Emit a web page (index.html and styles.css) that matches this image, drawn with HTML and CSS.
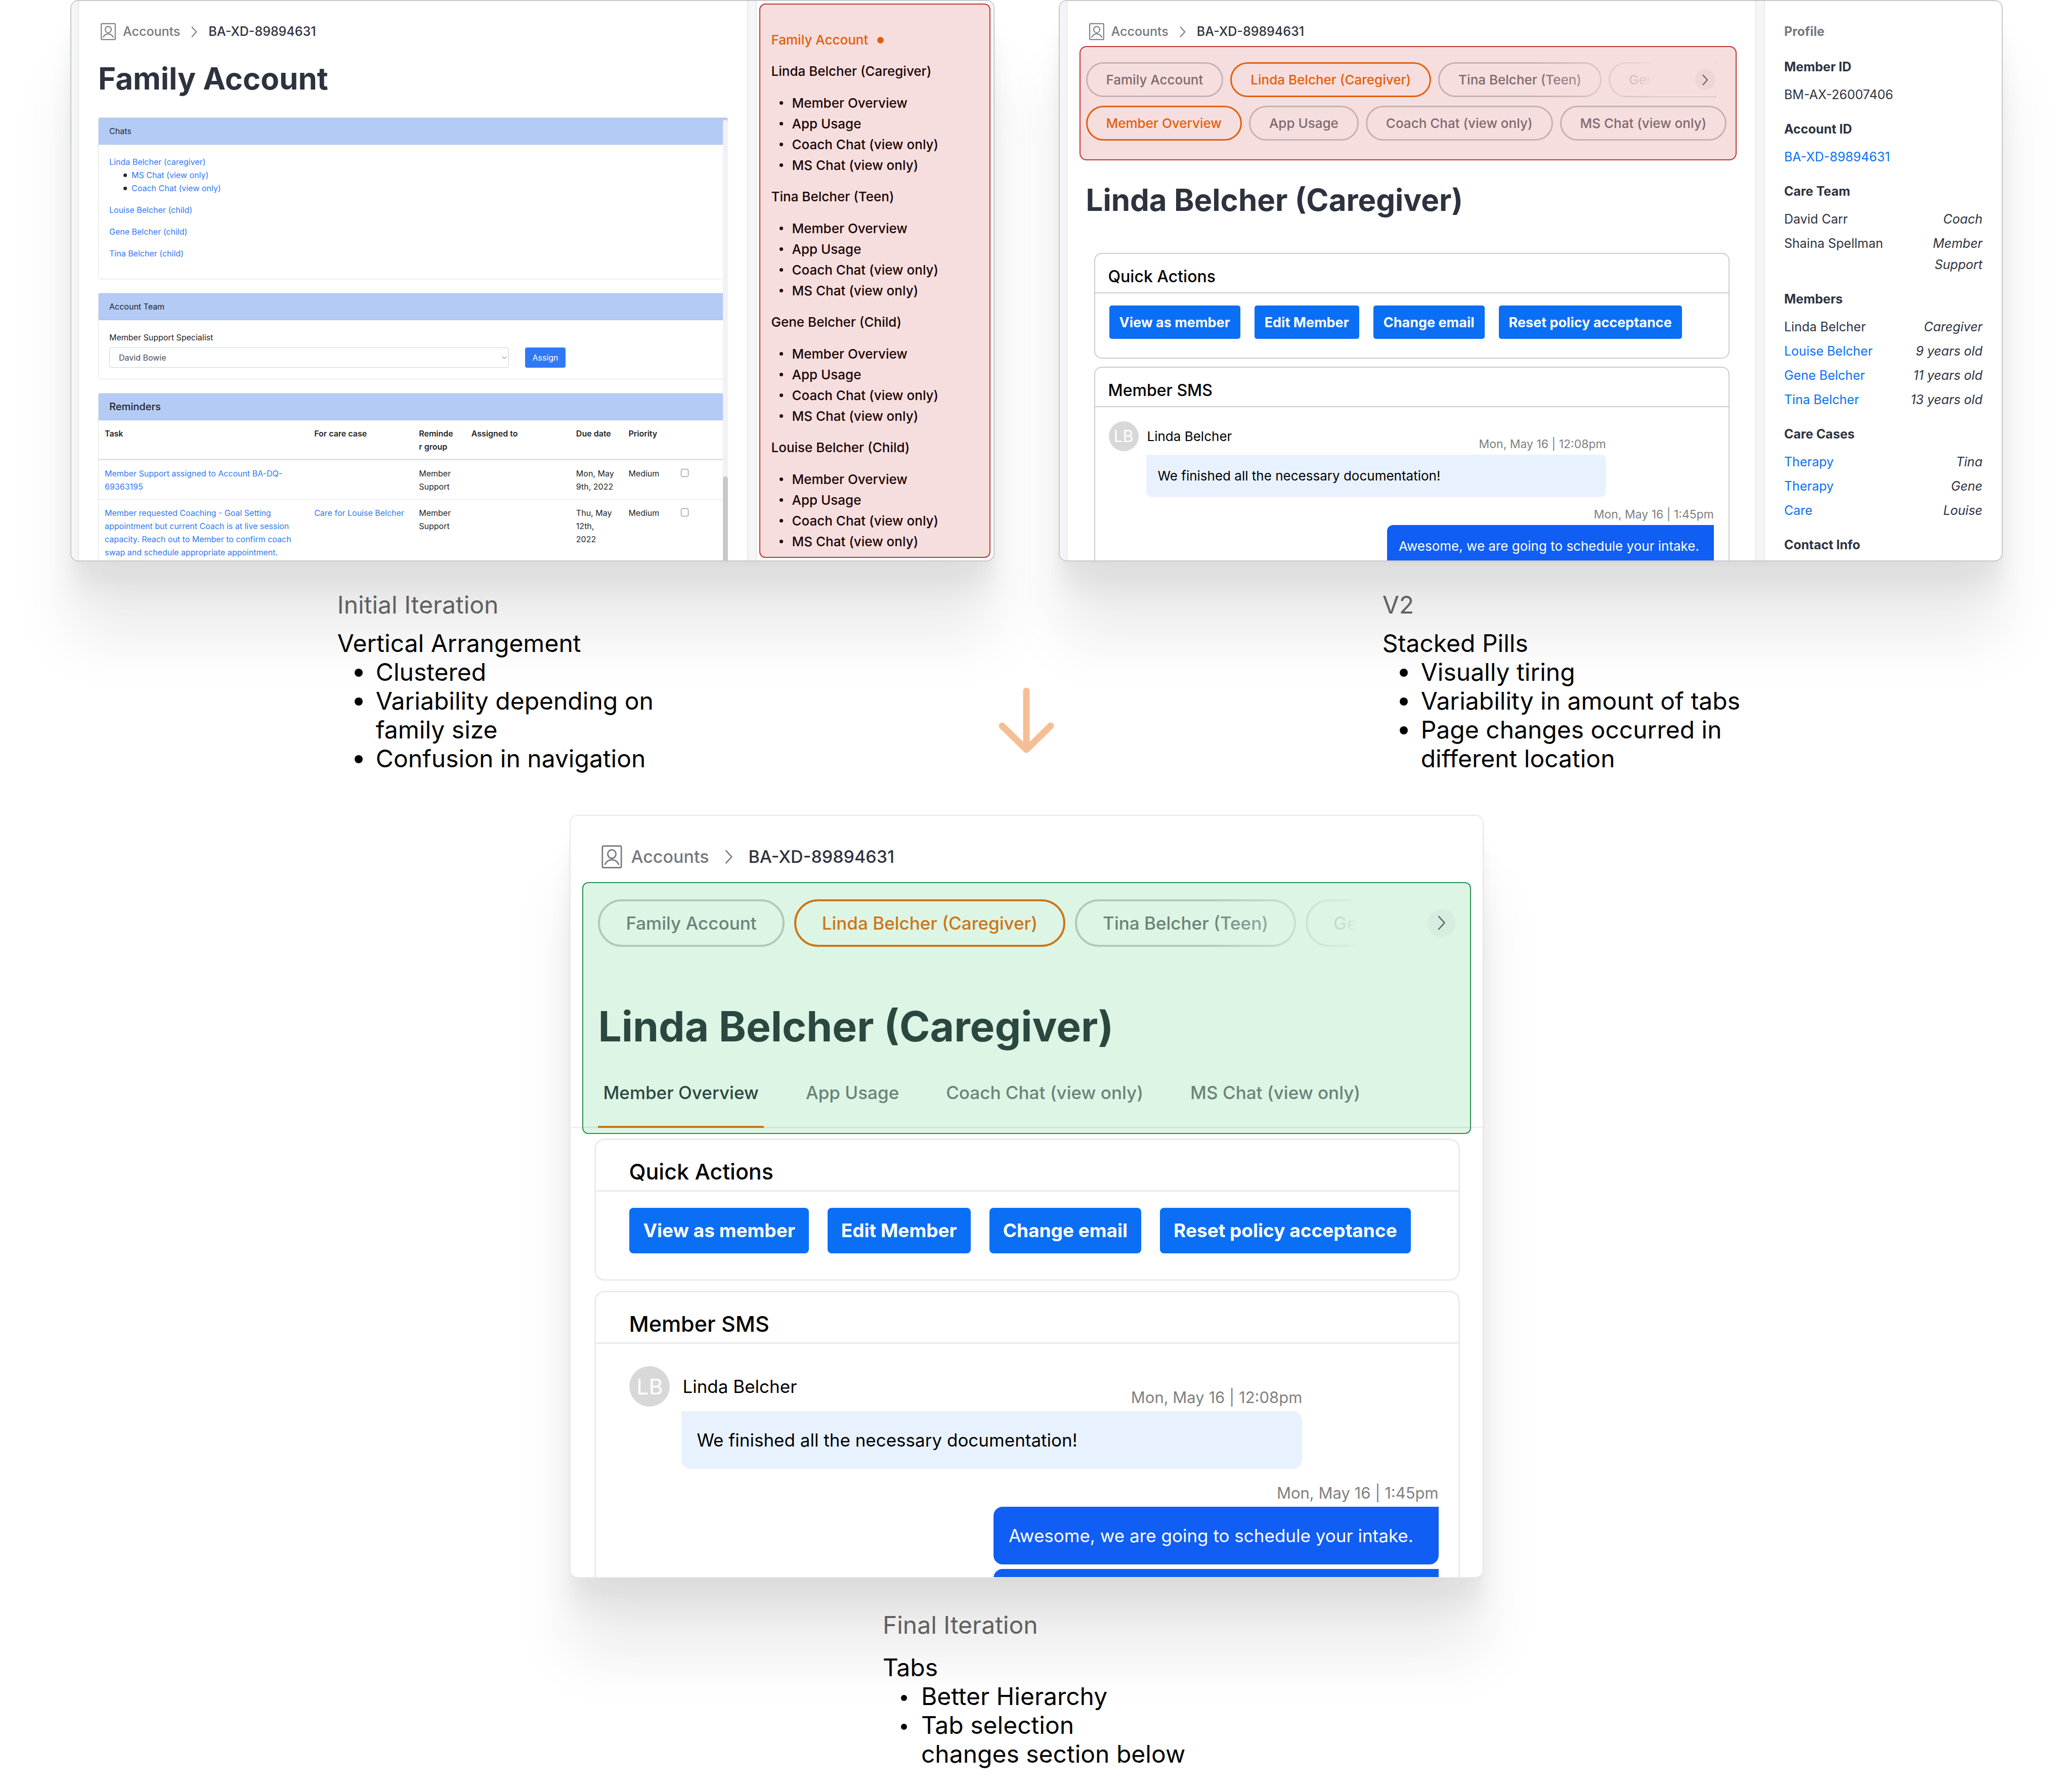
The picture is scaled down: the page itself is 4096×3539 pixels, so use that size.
FILE: index.html
```html
<!DOCTYPE html>
<html lang="en">
<head>
<meta charset="utf-8">
<meta name="viewport" content="width=device-width, initial-scale=1">
<title>Family account navigation: design iterations</title>
<link rel="stylesheet" href="styles.css">
</head>
<body>
<svg class="sprite" aria-hidden="true">
  <symbol id="icon-user" viewBox="0 0 30 34">
    <rect x="1.2" y="1.2" width="27.6" height="31.6" rx="1.6"/>
    <ellipse cx="15" cy="13" rx="6" ry="6.2"/>
    <path d="M5 28c2.200-4.400 5.800-6.600 10-6.600s7.800 2.200 10 6.600"/>
  </symbol>
  <symbol id="icon-chevron" viewBox="0 0 12 22">
    <path d="M1.500 1.500 10.200 11 1.500 20.500"/>
  </symbol>
</svg>

<main>
  <div class="compare">
    <section class="screen screen--first" aria-label="Initial iteration">
      <div class="main-col">
        <nav class="crumbs" aria-label="Breadcrumb">
          <svg class="crumbs__user"><use href="#icon-user"/></svg>
          <a href="#accounts">Accounts</a>
          <svg class="crumbs__sep"><use href="#icon-chevron"/></svg>
          <span class="crumbs__here">BA-XD-89894631</span>
        </nav>
        <h1>Family Account</h1>
        <div class="scroll">
          <section class="box">
            <h2 class="box__head">Chats</h2>
            <div class="box__body">
              <a href="#linda">Linda Belcher (caregiver)</a>
              <ul class="chat-list">
                <li><a href="#ms">MS Chat (view only)</a></li>
                <li><a href="#coach">Coach Chat (view only)</a></li>
              </ul>
              <p><a href="#louise">Louise Belcher (child)</a></p>
              <p><a href="#gene">Gene Belcher (child)</a></p>
              <p><a href="#tina">Tina Belcher (child)</a></p>
            </div>
          </section>
          <section class="box">
            <h2 class="box__head">Account Team</h2>
            <form class="box__body">
              <label for="specialist">Member Support Specialist</label>
              <div class="assign">
                <div class="select">
                  <select id="specialist"><option>David Bowie</option></select>
                  <svg viewBox="0 0 12 12"><path d="M2 4l4 4 4-4"/></svg>
                </div>
                <button type="button" class="assign__btn">Assign</button>
              </div>
            </form>
          </section>
          <section class="box">
            <h2 class="box__head box__head--big">Reminders</h2>
            <table>
              <colgroup><col class="c4"><col class="c2"><col class="c1"><col class="c2"><col class="c1"><col class="c1"><col class="c1"></colgroup>
              <thead>
                <tr><th>Task</th><th>For care case</th><th>Reminde<br>r group</th><th>Assigned to</th><th>Due date</th><th>Priority</th><th></th></tr>
              </thead>
              <tbody>
                <tr>
                  <td><a href="#task1">Member Support assigned to Account BA-DQ-69363195</a></td>
                  <td></td><td>Member Support</td><td></td><td>Mon, May 9th, 2022</td><td>Medium</td>
                  <td><input type="checkbox" aria-label="Complete first reminder"></td>
                </tr>
                <tr>
                  <td><a href="#task2">Member requested Coaching - Goal Setting appointment but current Coach is at live session capacity. Reach out to Member to confirm coach swap and schedule appropriate appointment.</a></td>
                  <td><a href="#care">Care for Louise Belcher</a></td><td>Member Support</td><td></td><td>Thu, May 12th,<br>2022</td><td>Medium</td>
                  <td><input type="checkbox" aria-label="Complete second reminder"></td>
                </tr>
              </tbody>
            </table>
          </section>
          <div class="scrollbar"><div class="scrollbar__thumb"></div></div>
        </div>
      </div>
      <aside class="side-nav">
        <nav class="tree" aria-label="Family">
          <p class="tree__current">Family Account</p>
          <h3>Linda Belcher (Caregiver)</h3>
          <ul><li>Member Overview</li><li>App Usage</li><li>Coach Chat (view only)</li><li>MS Chat (view only)</li></ul>
          <h3>Tina Belcher (Teen)</h3>
          <ul><li>Member Overview</li><li>App Usage</li><li>Coach Chat (view only)</li><li>MS Chat (view only)</li></ul>
          <h3>Gene Belcher (Child)</h3>
          <ul><li>Member Overview</li><li>App Usage</li><li>Coach Chat (view only)</li><li>MS Chat (view only)</li></ul>
          <h3>Louise Belcher (Child)</h3>
          <ul><li>Member Overview</li><li>App Usage</li><li>Coach Chat (view only)</li><li>MS Chat (view only)</li></ul>
        </nav>
      </aside>
    </section>

    <section class="screen screen--second" aria-label="V2">
      <div class="main-col">
        <nav class="crumbs" aria-label="Breadcrumb">
          <svg class="crumbs__user"><use href="#icon-user"/></svg>
          <a href="#accounts">Accounts</a>
          <svg class="crumbs__sep"><use href="#icon-chevron"/></svg>
          <span class="crumbs__here">BA-XD-89894631</span>
        </nav>
        <div class="mark mark--red">
          <div class="pills pills--clip">
            <button type="button" class="pill">Family Account</button>
            <button type="button" class="pill pill--on">Linda Belcher (Caregiver)</button>
            <button type="button" class="pill">Tina Belcher (Teen)</button>
            <button type="button" class="pill">Gene Belcher (Child)</button>
            <div class="pills__fade"></div>
            <button type="button" class="pills__next" aria-label="Next members"><svg><use href="#icon-chevron"/></svg></button>
          </div>
          <div class="pills">
            <button type="button" class="pill pill--on">Member Overview</button>
            <button type="button" class="pill">App Usage</button>
            <button type="button" class="pill">Coach Chat (view only)</button>
            <button type="button" class="pill">MS Chat (view only)</button>
          </div>
        </div>
        <h1>Linda Belcher (Caregiver)</h1>
        <div class="cards">
          <section class="card">
            <h2>Quick Actions</h2>
            <div class="actions">
              <button type="button">View as member</button>
              <button type="button">Edit Member</button>
              <button type="button">Change email</button>
              <button type="button">Reset policy acceptance</button>
            </div>
          </section>
          <section class="card">
            <h2>Member SMS</h2>
            <div class="sms">
              <div class="msg msg--in">
                <span class="avatar">LB</span>
                <div class="msg__col">
                  <div class="msg__head"><span>Linda Belcher</span><time>Mon, May 16 | 12:08pm</time></div>
                  <p class="bubble">We finished all the necessary documentation!</p>
                </div>
              </div>
              <div class="msg msg--out">
                <time>Mon, May 16 | 1:45pm</time>
                <p class="bubble">Awesome, we are going to schedule your intake.</p>
              </div>
            </div>
          </section>
        </div>
      </div>
      <aside class="profile">
        <h2>Profile</h2>
        <h3>Member ID</h3>
        <ul><li><span>BM-AX-26007406</span></li></ul>
        <h3>Account ID</h3>
        <ul><li><a href="#account">BA-XD-89894631</a></li></ul>
        <h3>Care Team</h3>
        <ul>
          <li><span>David Carr</span><em>Coach</em></li>
          <li><span>Shaina Spellman</span><em>Member<br>Support</em></li>
        </ul>
        <h3>Members</h3>
        <ul>
          <li><span>Linda Belcher</span><em>Caregiver</em></li>
          <li><a href="#louise">Louise Belcher</a><em>9 years old</em></li>
          <li><a href="#gene">Gene Belcher</a><em>11 years old</em></li>
          <li><a href="#tina">Tina Belcher</a><em>13 years old</em></li>
        </ul>
        <h3>Care Cases</h3>
        <ul>
          <li><a href="#t1">Therapy</a><em>Tina</em></li>
          <li><a href="#t2">Therapy</a><em>Gene</em></li>
          <li><a href="#c1">Care</a><em>Louise</em></li>
        </ul>
        <h3>Contact Info</h3>
      </aside>
    </section>

    <div class="caption caption--first">
      <h2>Initial Iteration</h2>
      <p>Vertical Arrangement</p>
      <ul><li>Clustered</li><li>Variability depending on family size</li><li>Confusion in navigation</li></ul>
    </div>
    <svg class="arrow" viewBox="0 0 110 130" aria-hidden="true"><path d="M55 7v114M7 76l48 47 48-47"/></svg>
    <div class="caption caption--second">
      <h2>V2</h2>
      <p>Stacked Pills</p>
      <ul><li>Visually tiring</li><li>Variability in amount of tabs</li><li>Page changes occurred in different location</li></ul>
    </div>
  </div>

  <div class="final">
    <section class="screen screen--final" aria-label="Final iteration">
      <div class="main-col">
        <nav class="crumbs" aria-label="Breadcrumb">
          <svg class="crumbs__user"><use href="#icon-user"/></svg>
          <a href="#accounts">Accounts</a>
          <svg class="crumbs__sep"><use href="#icon-chevron"/></svg>
          <span class="crumbs__here">BA-XD-89894631</span>
        </nav>
        <div class="mark mark--green">
          <div class="pills pills--clip">
            <button type="button" class="pill">Family Account</button>
            <button type="button" class="pill pill--on">Linda Belcher (Caregiver)</button>
            <button type="button" class="pill">Tina Belcher (Teen)</button>
            <button type="button" class="pill">Gene Belcher (Child)</button>
            <div class="pills__fade"></div>
            <button type="button" class="pills__next" aria-label="Next members"><svg><use href="#icon-chevron"/></svg></button>
          </div>
          <h1>Linda Belcher (Caregiver)</h1>
          <div class="tabs" role="tablist">
            <button type="button" role="tab" aria-selected="true">Member Overview</button>
            <button type="button" role="tab" aria-selected="false">App Usage</button>
            <button type="button" role="tab" aria-selected="false">Coach Chat (view only)</button>
            <button type="button" role="tab" aria-selected="false">MS Chat (view only)</button>
          </div>
        </div>
        <div class="cards">
          <section class="card">
            <h2>Quick Actions</h2>
            <div class="actions">
              <button type="button">View as member</button>
              <button type="button">Edit Member</button>
              <button type="button">Change email</button>
              <button type="button">Reset policy acceptance</button>
            </div>
          </section>
          <section class="card">
            <h2>Member SMS</h2>
            <div class="sms">
              <div class="msg msg--in">
                <span class="avatar">LB</span>
                <div class="msg__col">
                  <div class="msg__head"><span>Linda Belcher</span><time>Mon, May 16 | 12:08pm</time></div>
                  <p class="bubble">We finished all the necessary documentation!</p>
                </div>
              </div>
              <div class="msg msg--out">
                <time>Mon, May 16 | 1:45pm</time>
                <p class="bubble">Awesome, we are going to schedule your intake.</p>
                <p class="bubble"></p>
              </div>
            </div>
          </section>
        </div>
      </div>
    </section>
    <div class="caption caption--final">
      <h2>Final Iteration</h2>
      <p>Tabs</p>
      <ul><li>Better Hierarchy</li><li>Tab selection<br>changes section below</li></ul>
    </div>
  </div>
</main>
</body>
</html>
```
FILE: styles.css
```css
*, *::before, *::after { box-sizing: border-box; }

body {
  margin: 0;
  background: #fff;
  color: #000;
  font-family: "Inter", "Liberation Sans", sans-serif;
}

h1, h2, h3, p, ul { margin: 0; padding: 0; }
ul { list-style: none; }
a { text-decoration: none; }
button { margin: 0; font-family: inherit; white-space: nowrap; }
svg { display: block; fill: none; stroke: currentColor; stroke-linecap: round; stroke-linejoin: round; }
.sprite { position: absolute; width: 0; height: 0; }

/* Page grid: two screens on top, captions and arrow below */
.compare {
  display: grid;
  grid-template-columns: 1827fr 127px 1867fr;
  padding: 0 137px 0 139px;
}

/* Screens */
.screen {
  --text: 26px;
  --button: 27px;
  --time: 23px;
  --title: 32px;
  --line: 2px;
  --card-line: #ccc;
  display: flex;
  overflow: hidden;
  background: #fff;
  border: 2px solid #c6c9ce;
  border-radius: 16px;
  box-shadow:
    0 150px 120px rgba(0, 0, 0, .08),
    0 64px 50px rgba(0, 0, 0, .045),
    0 34px 28px rgba(0, 0, 0, .02),
    0 10px 8px rgba(0, 0, 0, .01);
}
.screen--first { grid-area: 1 / 1; aspect-ratio: 1827 / 1110; }
.screen--second { grid-area: 1 / 3; aspect-ratio: 1867 / 1110; }
.main-col { flex: 1; min-width: 0; display: flex; flex-direction: column; }
.screen--first .main-col,
.screen--second .main-col {
  border-left: 13px solid #f5f5f8;
  border-right: 2px solid #e8e9ec;
  box-shadow: inset 2px 0 #e6e7ea;
}
.side-nav, .profile {
  flex: none;
  border-left: 15px solid #f6f6f9;
  box-shadow: inset 2px 0 #e8e9ec;
}

.crumbs {
  display: flex;
  align-items: center;
  gap: 22px;
  padding: 43px 45px 0;
  font-size: 25px;
  font-weight: 500;
  line-height: 35px;
  color: #757780;
}
.crumbs a { color: inherit; }
.crumbs__user { width: 30px; height: 35px; margin-right: -8px; stroke-width: 2; }
.crumbs__sep { width: 12px; height: 22px; stroke-width: 2; }
.crumbs__here { color: #2d323f; }

h1 { color: #2d323f; font-size: 60px; line-height: 72px; font-weight: 700; }

/* First screen */
.screen--first h1 { padding: 39px 40px 41px; }
.scroll { position: relative; flex: 1; min-height: 0; margin: 0 38px 0 40px; overflow: hidden; font-size: 16px; line-height: 26px; color: #212529; }
.scroll a { color: #3079f6; }
.box { margin-bottom: 27px; border: 1px solid #dedfe0; border-radius: 4px; }
.box__head { padding: 0 21px; background: #b4cbf6; border-bottom: 1px solid #a6bfe9; font-size: 16px; line-height: 52px; font-weight: 400; }
.box__head--big { font-size: 20px; font-weight: 500; }
.box__body { padding: 21px 21px 22px; }
.box__body p { margin-top: 17px; }
.box__body p:last-child { margin-bottom: 15px; }
.box__body label { display: block; }
.chat-list li { display: flex; align-items: center; gap: 9px; padding-left: 28px; }
.chat-list li::before { content: ""; width: 7px; height: 7px; border-radius: 50%; background: #212529; }
.assign { display: flex; gap: 32px; margin-top: 7px; }
.select { position: relative; width: 790px; }
.select select {
  appearance: none;
  width: 100%;
  height: 40px;
  padding: 0 18px;
  border: 1px solid #ced4da;
  border-radius: 4px;
  background: #fff;
  color: #495057;
  font: inherit;
}
.select svg { position: absolute; right: 3px; top: 14px; width: 12px; height: 12px; color: #555; }
.assign__btn { height: 40px; width: 80px; padding: 0; border: 0; border-radius: 4px; background: #3079f6; color: #fff; font-size: 16px; }

table { width: 100%; border-collapse: collapse; table-layout: fixed; }
.c4 { width: 33.333%; }
.c2 { width: 16.667%; }
.c1 { width: 8.333%; }
th, td { padding: 13px 12px 12px; vertical-align: top; text-align: left; }
th { padding-bottom: 11px; font-weight: 600; border-bottom: 3px solid #dee2e6; }
tbody tr + tr td { border-top: 1px solid #dee2e6; }
td input { appearance: none; display: block; width: 15px; height: 16px; margin: 4px 0; border: 1px solid #767676; border-radius: 3px; background: #fff; }

.scrollbar { position: absolute; top: 5px; right: 0; bottom: 0; width: 10px; border-radius: 5px 5px 0 0; background: #f1f2f7; }
.scrollbar__thumb { position: absolute; top: 81%; bottom: 0; width: 100%; border-radius: 5px 5px 0 0; background: #c5c9cd; }

.side-nav { width: 485px; padding: 5px 6px 5px 7px; }
.tree {
  height: 100%;
  padding: 50px 22px 0;
  border: 2px solid #c33233;
  border-radius: 12px;
  background: #f6dedf;
  color: #1a0505;
  font-size: 26px;
  line-height: 40px;
  font-weight: 500;
}
.tree h3 { font: inherit; }
.tree ul { margin: 22px 0; }
.tree li { display: flex; align-items: center; gap: 18px; padding-left: 16px; line-height: 41px; }
.tree li::before { content: ""; width: 7px; height: 7px; border-radius: 50%; background: currentColor; }
.tree__current { display: flex; align-items: center; gap: 18px; margin-bottom: 22px; color: #e35f0b; }
.tree__current::after { content: ""; width: 13px; height: 13px; border-radius: 50%; background: currentColor; }

/* Marked areas with pills */
.mark { border: 2px solid; }
.mark--red {
  --bg: #f6dedf;
  --ink: #7f696d;
  --ring: #c6b1b4;
  --on: #e35f0b;
  --next: #eed5d8;
  margin: 11px 37px 0 26px;
  padding: 30px 11px 37px;
  border-color: #c33233;
  border-radius: 14px;
  background: var(--bg);
}
.pills { display: flex; gap: 14px; }
.pills + .pills { margin-top: 17px; }
.pills--clip { position: relative; overflow: hidden; margin-right: 27px; }
.pill {
  flex: none;
  height: 69px;
  padding: 0 37px;
  border: 3px solid var(--ring);
  border-radius: 35px;
  background: none;
  color: var(--ink);
  font-size: var(--text);
  font-weight: 500;
}
.pill--on { border-color: var(--on); color: var(--on); }
.pills__fade {
  position: absolute;
  top: 0;
  right: 1px;
  bottom: 1px;
  width: 29%;
  background: linear-gradient(90deg, rgba(246, 222, 223, 0), rgba(246, 222, 223, .85) 62%, #f6dedf 65%);
}
.pills__next {
  position: absolute;
  right: 1px;
  top: 14px;
  display: flex;
  align-items: center;
  justify-content: center;
  width: 41px;
  height: 41px;
  padding: 0;
  border: 0;
  border-radius: 50%;
  background: var(--next);
  color: #6a5559;
}
.pills__next svg { width: 12px; height: 22px; stroke-width: 2; }

/* Second screen */
.screen--second h1 { padding: 42px 39px 69px; }
.cards { display: flex; flex-direction: column; gap: 16px; padding: 0 51px 0 55px; }
.card { border: var(--line) solid var(--card-line); border-radius: 15px; }
.card h2 {
  padding: 25px 26px 11px;
  border-bottom: var(--line) solid var(--card-line);
  font-size: var(--title);
  line-height: 40px;
  font-weight: 500;
}
.actions { display: flex; gap: 28px; padding: 24px 28px 37px; }
.actions button {
  height: 66px;
  padding: 0 20px;
  border: 0;
  border-radius: 5px;
  background: #0b6ff5;
  color: #fff;
  font-size: var(--button);
  font-weight: 700;
}
.sms { padding: 28px 29px 28px 27px; font-size: var(--text); }
.msg--in { display: flex; gap: 15px; }
.msg__col { flex: 1; }
.avatar {
  display: flex;
  align-items: center;
  justify-content: center;
  width: 59px;
  height: 59px;
  border-radius: 50%;
  background: #d8d8d8;
  color: #fff;
  font-size: var(--title);
}
.msg__head { display: flex; justify-content: space-between; width: 81%; height: 59px; margin-bottom: 7px; padding-left: 2px; line-height: 60px; }
.msg time { align-self: flex-end; color: #7f7f7f; font-size: var(--time); line-height: 28px; }
.bubble { height: 84px; padding: 0 23px; border-radius: 12px; line-height: 84px; white-space: nowrap; }
.msg--in .bubble { width: 81%; background: #e8f2ff; border-top-left-radius: 0; }
.msg--out { display: flex; flex-direction: column; align-items: flex-end; gap: 7px; margin-top: 20px; }
.msg--out .bubble { width: 54%; background: #105ef4; color: #fff; border-top-right-radius: 0; }

.profile { width: 485px; padding: 39px 38px 0 40px; color: #2d323f; font-size: 25px; line-height: 42px; }
.profile h2 { margin-bottom: 28px; color: #757780; font: inherit; font-weight: 700; }
.profile h3 { margin-bottom: 13px; font: inherit; font-weight: 700; }
.profile ul { display: flex; flex-direction: column; gap: 6px; margin-bottom: 26px; }
.profile li { display: flex; justify-content: space-between; }
.profile em { text-align: right; }
.profile a { color: #0b6ff5; }

/* Final screen */
.final { padding-top: 83px; }
.screen--final {
  --text: 35px;
  --button: 37px;
  --time: 31px;
  --title: 43px;
  --line: 3px;
  --card-line: #ebebeb;
  width: 44.1%;
  margin-left: 27.5%;
  aspect-ratio: 1806 / 1509;
  border-color: #e5e8ec;
}
.screen--final .crumbs { gap: 31px; padding: 58px 61px 0; font-size: 34px; line-height: 46px; }
.screen--final .crumbs__user { width: 41px; height: 46px; margin-right: -14px; }
.screen--final .crumbs__sep { width: 16px; height: 28px; }
.mark--green {
  --ink: #6b8378;
  --ring: #b0c9bb;
  --on: #cc7618;
  --next: #d6ede0;
  margin: 27px 23px 0;
  padding: 32px 28px 10px 29px;
  border-color: #2a9150;
  border-radius: 12px;
  background: #ddf5e5;
}
.mark--green .pills { gap: 19px; margin-right: 0; }
.mark--green .pill { height: 94px; padding: 0 51px; border-width: 4px; border-radius: 47px; }
.mark--green .pills__fade { right: 0; bottom: 0; background: linear-gradient(90deg, rgba(221, 245, 229, 0), rgba(221, 245, 229, .85) 57%, #ddf5e5 60%); }
.mark--green .pills__next { right: 0; top: 19px; width: 56px; height: 56px; color: #5b7267; }
.mark--green .pills__next svg { width: 16px; height: 29px; }
.screen--final h1 { padding: 108px 0 56px; color: #2b4840; font-size: 82px; line-height: 100px; }
.tabs {
  display: flex;
  gap: 73px;
  margin: 0 -53px;
  padding: 0 53px;
  border-bottom: 2px solid rgba(0, 0, 0, .08);
}
.tabs button {
  margin-bottom: -2px;
  padding: 0 10px 42px;
  border: 0;
  border-bottom: 4px solid transparent;
  background: none;
  color: var(--ink);
  font-size: var(--text);
  line-height: 48px;
  font-weight: 500;
}
.tabs button[aria-selected="true"] { color: #2b4840; border-bottom-color: var(--on); }

.screen--final .cards { gap: 20px; padding: 9px 45px 0 47px; }
.screen--final .card { border-radius: 20px; }
.screen--final .card h2 { padding: 34px 65px 9px; line-height: 56px; }
.screen--final .actions { gap: 37px; padding: 32px 66px 51px; }
.screen--final .actions button { height: 90px; padding: 0 27px; border-radius: 8px; }
.screen--final .sms { padding: 44px 39px 44px 66px; }
.screen--final .msg--in { gap: 23px; }
.screen--final .avatar { width: 80px; height: 80px; }
.screen--final .msg__head { width: 82%; height: 80px; margin-bottom: 9px; line-height: 80px; }
.screen--final .msg time { line-height: 36px; }
.screen--final .bubble { height: 114px; padding: 0 30px; border-radius: 18px; line-height: 114px; }
.screen--final .msg--in .bubble { width: 82%; border-top-left-radius: 0; }
.screen--final .msg--out { gap: 9px; margin-top: 30px; }
.screen--final .msg--out .bubble { width: 55%; border-top-right-radius: 0; }

/* Captions */
.caption { position: relative; font-size: 48px; line-height: 57px; }
.caption h2 { margin-bottom: 19px; color: #606060; font: inherit; }
.caption li { display: flex; gap: 26px; padding-left: 34px; }
.caption li::before { content: ""; flex: none; width: 16px; height: 16px; margin-top: 22px; border-radius: 50%; background: #000; }
.caption--first { grid-area: 2 / 1; width: 640px; margin: 57px 0 0 28.9%; }
.caption--second { grid-area: 2 / 3; width: 730px; margin: 57px 0 0 34.3%; }
.caption--final { width: 640px; margin: 64px 0 0 42.6%; }
.caption--final h2 { margin-bottom: 27px; }
.caption--final li { gap: 28px; padding-left: 36px; }
.caption--final li::before { width: 12px; height: 12px; margin-top: 26px; }
.arrow { grid-area: 2 / 2; justify-self: center; width: 110px; height: 130px; margin-top: 249px; color: #f6be95; stroke-width: 13; }
```
